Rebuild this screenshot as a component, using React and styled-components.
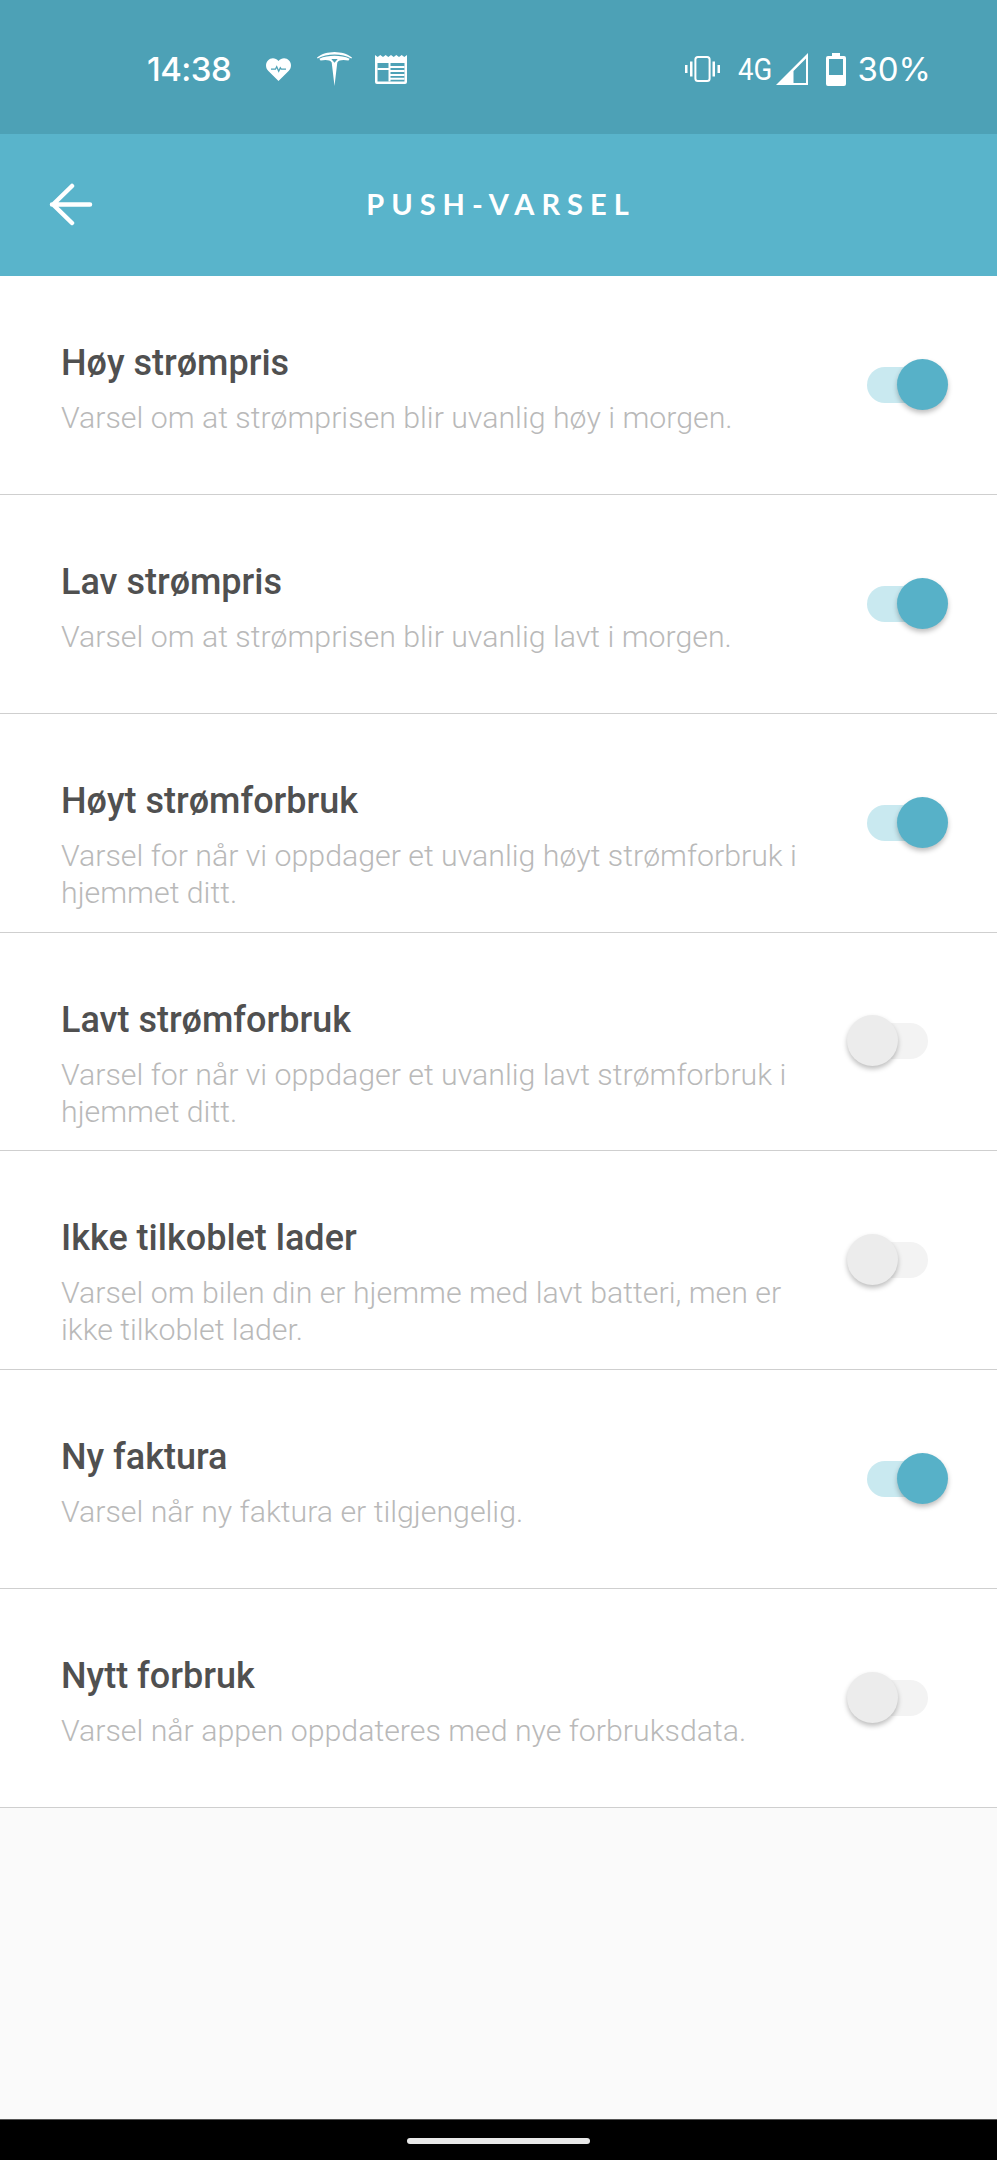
import React from "react";
import styled, { createGlobalStyle } from "styled-components";

const Global = createGlobalStyle`
  html, body { margin: 0; padding: 0; background: #fafafa; }
  * { box-sizing: border-box; }
`;

const Screen = styled.div`
  width: 997px;
  height: 2160px;
  display: flex;
  flex-direction: column;
  background: #fafafa;
  font-family: Roboto, "Liberation Sans", sans-serif;
  overflow: hidden;
`;

const StatusBar = styled.div`
  height: 134px;
  flex: none;
  background: #4da1b6;
  color: #fff;
  display: flex;
  align-items: center;
  padding: 4px 66px 0 147px;
`;

const Clock = styled.span`
  font-family: Inter, Roboto, sans-serif;
  font-size: 33px;
  font-weight: 500;
  letter-spacing: -0.5px;
  width: 119px;
  flex: none;
`;

const NotifIcons = styled.div`
  display: flex;
  align-items: center;
  gap: 26px;
  flex: 1;
`;

const SysIcons = styled.div`
  display: flex;
  align-items: center;
`;

const NetLabel = styled.span`
  font-size: 32px;
  font-weight: 400;
  margin: 0 5px 0 18px;
  line-height: 1;
  width: 33px;
  display: inline-block;
  white-space: nowrap;
  transform: scaleX(0.86);
  transform-origin: left center;
`;

const Percent = styled.span`
  font-family: Inter, Roboto, sans-serif;
  font-size: 33px;
  font-weight: 400;
  margin-left: 11px;
  line-height: 1;
`;

const AppBar = styled.header`
  height: 142px;
  flex: none;
  background: #59b4cb;
  color: #fff;
  position: relative;
  display: flex;
  align-items: center;
  justify-content: center;
`;

const BackButton = styled.div`
  position: absolute;
  left: 49px;
  top: 46px;
  display: flex;
`;

const Title = styled.h1`
  margin: 0 0 3px 5px;
  font-family: Lato, sans-serif;
  font-size: 29px;
  font-weight: 700;
  letter-spacing: 7px;
`;

const List = styled.div`
  background: #fff;
  flex: none;
`;

const Row = styled.div`
  height: 218.85px;
  display: flex;
  align-items: center;
  justify-content: space-between;
  padding: 0 48px 0 61px;
  border-bottom: 1.5px solid #cfcfcf;
`;

const Texts = styled.div`
  width: 760px;
  flex: none;
  align-self: flex-start;
  padding-top: 66px;
`;

const RowTitle = styled.div`
  font-size: 36px;
  line-height: 42px;
  font-weight: 500;
  color: #505050;
`;

const RowDesc = styled.div`
  margin-top: 15px;
  font-size: 30.3px;
  line-height: 37px;
  font-weight: 300;
  color: #b9b9b9;
`;

const Toggle = styled.div`
  position: relative;
  width: 61px;
  height: 36px;
  flex: none;
  margin-right: 21px;
  border-radius: 18px;
  background: ${(p) => (p.$on ? "#c9e9f0" : "#f3f3f3")};
`;

const Knob = styled.div`
  position: absolute;
  top: -8px;
  left: ${(p) => (p.$on ? "30px" : "-20px")};
  width: 51px;
  height: 51px;
  border-radius: 50%;
  background: ${(p) => (p.$on ? "#57b1c8" : "#ececec")};
  box-shadow: 0 3px 5px rgba(0, 0, 0, 0.25);
`;

const Filler = styled.div`
  flex: 1;
`;

const NavBar = styled.div`
  height: 41px;
  flex: none;
  background: #000;
  border-top: 1px solid #555;
  display: flex;
  justify-content: center;
  padding-top: 18px;
`;

const NavHandle = styled.div`
  width: 183px;
  height: 6px;
  border-radius: 3px;
  background: #e8e8e8;
`;

const BatteryIcon = styled.svg`
  margin-left: 18px;
`;

const PaperIcon = styled.svg`
  margin-left: -3px;
`;

const Heart = () => (
  <svg width="25" height="23" viewBox="0 0 25 23">
    <path
      fill="#fff"
      d="M12.5 23 2.4 13C-.8 9.8-.6 5 2 2.4 4.8-.6 9.6-.6 12.5 3 15.4-.6 20.2-.6 23 2.4c2.6 2.6 2.8 7.4-.4 10.6Z"
    />
    <path fill="none" stroke="#4da1b6" strokeWidth="1.3" d="M5 11.2h4.4l1.3-2.4 2 4.4 1.6-3.4.9 1.4H20" />
  </svg>
);

const Tesla = () => (
  <svg width="35" height="34" viewBox="0 0 35 34">
    <path fill="#fff" d="M0 5.500C5 1.600 11 .2 17.500 0 24 .2 30 1.600 35 5.500l-.6 1C29.500 3.700 24 2.500 17.500 2.400 11 2.500 5.500 3.700.6 6.500Z" />
    <path
      fill="#fff"
      d="M17.500 34 14.700 10.500C13 8 9 7.500 3.500 8.600L2.300 6.800C7 4.600 12 3.900 17.500 3.800c5.500.1 10.500.8 15.200 3l-1.200 1.800C26 7.500 22 8 20.300 10.500Z"
    />
    <path fill="#4da1b6" d="M14.300 7h6.400l-3.200 3.700Z" />
  </svg>
);

const Paper = () => (
  <PaperIcon width="32" height="30" viewBox="0 0 32 30">
    <path
      fill="#fff"
      fillRule="evenodd"
      d="M0 1l2.700 2L5.300 1 8 3l2.700-2 2.600 2L16 1l2.700 2 2.600-2L24 3l2.700-2 2.600 2L32 1v27a2 2 0 0 1-2 2H2a2 2 0 0 1-2-2ZM2.500 9v18.500h27V9Z"
    />
    <path fill="#fff" d="M2.500 14h13v2h-13ZM13.500 9h2v18.500h-2ZM15 12h14.500v2H15ZM15 16h14.500v2H15ZM15 20h14.500v2H15ZM15 23.800h14.500v2H15Z" />
  </PaperIcon>
);

const Vibrate = () => (
  <svg width="35" height="26" viewBox="0 0 35 26">
    <rect x="10.400" y="1" width="14.200" height="24" rx="2.500" fill="none" stroke="#fff" strokeWidth="2" />
    <path fill="#fff" d="M5 5.500h2.500v15H5ZM0 9h2.500v8H0ZM27.500 5.500H30v15h-2.500ZM32.500 9H35v8h-2.500Z" />
  </svg>
);

const Signal = () => (
  <svg width="32" height="32" viewBox="0 0 32 32">
    <path
      fill="#fff"
      fillRule="evenodd"
      d="M32 0v32H0ZM30 5.500 17.500 18v12H30Z"
    />
  </svg>
);

const Battery = () => (
  <BatteryIcon width="20" height="33" viewBox="0 0 20 33">
    <path
      fill="#fff"
      fillRule="evenodd"
      d="M6 0h8v3h4a2 2 0 0 1 2 2v26a2 2 0 0 1-2 2H2a2 2 0 0 1-2-2V5a2 2 0 0 1 2-2h4ZM3 6v16h14V6Z"
    />
  </BatteryIcon>
);

const BackArrow = () => (
  <svg width="46" height="46" viewBox="0 0 46 46" fill="none" stroke="#fff" strokeWidth="4.500" strokeLinecap="round" strokeLinejoin="round">
    <path d="M3 24.500h38M23 6 4 24.500 23 43" />
  </svg>
);

const items = [
  { title: "Høy strømpris", desc: "Varsel om at strømprisen blir uvanlig høy i morgen.", on: true },
  { title: "Lav strømpris", desc: "Varsel om at strømprisen blir uvanlig lavt i morgen.", on: true },
  { title: "Høyt strømforbruk", desc: "Varsel for når vi oppdager et uvanlig høyt strømforbruk i hjemmet ditt.", on: true },
  { title: "Lavt strømforbruk", desc: "Varsel for når vi oppdager et uvanlig lavt strømforbruk i hjemmet ditt.", on: false },
  { title: "Ikke tilkoblet lader", desc: "Varsel om bilen din er hjemme med lavt batteri, men er ikke tilkoblet lader.", on: false },
  { title: "Ny faktura", desc: "Varsel når ny faktura er tilgjengelig.", on: true },
  { title: "Nytt forbruk", desc: "Varsel når appen oppdateres med nye forbruksdata.", on: false },
];

export default function App() {
  return (
    <Screen>
      <Global />
      <StatusBar>
        <Clock>14:38</Clock>
        <NotifIcons>
          <Heart />
          <Tesla />
          <Paper />
        </NotifIcons>
        <SysIcons>
          <Vibrate />
          <NetLabel>4G</NetLabel>
          <Signal />
          <Battery />
          <Percent>30%</Percent>
        </SysIcons>
      </StatusBar>
      <AppBar>
        <BackButton>
          <BackArrow />
        </BackButton>
        <Title>PUSH-VARSEL</Title>
      </AppBar>
      <List>
        {items.map((it) => (
          <Row key={it.title}>
            <Texts>
              <RowTitle>{it.title}</RowTitle>
              <RowDesc>{it.desc}</RowDesc>
            </Texts>
            <Toggle $on={it.on}>
              <Knob $on={it.on} />
            </Toggle>
          </Row>
        ))}
      </List>
      <Filler />
      <NavBar>
        <NavHandle />
      </NavBar>
    </Screen>
  );
}
